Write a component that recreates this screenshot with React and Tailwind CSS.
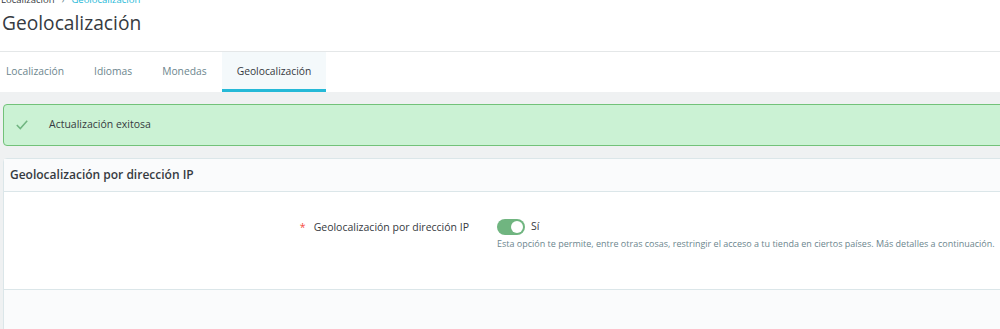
export default function App() {
  return (
    <div className="w-[1000px] h-[329px] overflow-hidden bg-[#eff1f2] text-[#363a41]" style={{ fontFamily: '"Open Sans", "Noto Sans", sans-serif' }}>
      {/* header */}
      <div className="bg-white w-[1010px]">
        <div className="pl-[1px] -mt-[6px] h-[12px] text-[9.5px] leading-[12px] text-[#363a41] flex items-center gap-[7px]">
          <span>Localización</span>
          <span className="text-[#6c868e]">›</span>
          <span className="text-[#25b9d7]">Geolocalización</span>
        </div>
        <div className="pl-[2px] pt-[4px] h-[46px] text-[19.2px] leading-[26px] border-b border-[#e4e7e8]">
          Geolocalización
        </div>
        <div className="flex h-[40px] -ml-[9px] text-[10.3px]">
          <div className="px-[15px] flex items-center text-[#6c868e]">Localización</div>
          <div className="px-[15px] flex items-center text-[#6c868e]">Idiomas</div>
          <div className="px-[15px] flex items-center text-[#6c868e]">Monedas</div>
          <div className="px-[15px] flex items-center text-[#363a41] bg-[#f4f9fb] border-b-[3px] border-[#25b9d7] pt-[3px]">Geolocalización</div>
        </div>
      </div>

      <div className="pl-[3px] pt-[12px] w-[1020px]">
        {/* alert */}
        <div className="h-[42px] rounded-[4px] border border-[#72c279] bg-[#cbf2d4] flex items-center text-[10.5px]">
          <svg className="ml-[12px] mr-[21px]" width="12" height="10" viewBox="0 0 12 10" fill="none">
            <path d="M0.8 5 L4.3 8.6 L11.2 0.8" stroke="#70b580" strokeWidth="1.5" />
          </svg>
          <span>Actualización exitosa</span>
        </div>

        {/* card */}
        <div className="mt-[12px] border border-[#dbe6e9] rounded-tl-[4px] bg-white">
          <div className="h-[33px] bg-[#fafbfc] border-b border-[#dbe6e9] flex items-center pl-[6px] text-[12px] font-semibold">
            Geolocalización por dirección IP
          </div>
          <div className="h-[97px] flex pt-[27px]">
            <div className="w-[493px] flex justify-end pr-[28px] text-[10.5px] leading-[16px]">
              <span className="text-[#f54c3e] mr-[8px]">*</span>
              <span>Geolocalización por dirección IP</span>
            </div>
            <div className="flex flex-col">
              <div className="flex items-center h-[16px]">
                <div className="w-[28px] h-[16px] rounded-full bg-[#70b580] relative">
                  <div className="absolute right-[2px] top-[2px] w-[12px] h-[12px] rounded-full bg-white"></div>
                </div>
                <span className="ml-[6px] text-[10.5px]">Sí</span>
              </div>
              <div className="mt-[2px] text-[9px] leading-[14px] text-[#6c868e] whitespace-nowrap">
                Esta opción te permite, entre otras cosas, restringir el acceso a tu tienda en ciertos países. Más detalles a continuación.
              </div>
            </div>
          </div>
          <div className="h-[60px] bg-[#fafbfc] border-t border-[#dbe6e9]"></div>
        </div>
      </div>
    </div>
  );
}
